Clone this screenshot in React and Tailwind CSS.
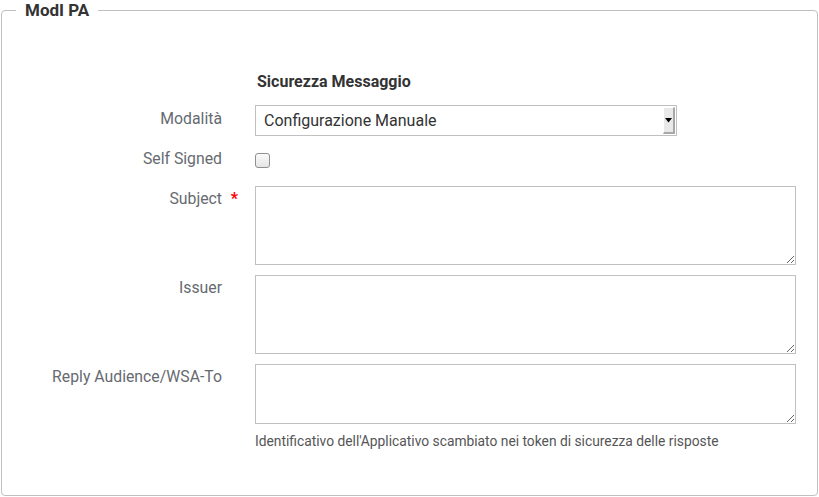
import React from "react";

export default function App() {
  const font = { fontFamily: "Roboto, 'Liberation Sans', sans-serif" };
  return (
    <div className="w-[819px] h-[497px] bg-white px-[1px]" style={font}>
      <fieldset className="border border-[#c0c0c0] rounded-[4px] h-[496px] px-[14px]">
        <legend className="px-[9px] text-[17px] leading-[20px] font-bold text-[#333]">ModI PA</legend>
        <div className="flex flex-col -ml-[14px]">
          {/* Header */}
          <div className="flex mt-[52px]">
            <div className="w-[220px] shrink-0" />
            <div className="ml-[35px] text-[16px] leading-[20px] font-bold text-[#333]">Sicurezza Messaggio</div>
          </div>
          {/* Modalità */}
          <div className="flex mt-[13px] items-center">
            <div className="w-[220px] shrink-0 text-right text-[15.8px] leading-[20px] text-[#666a70] -mt-[4px]">Modalità</div>
            <div className="ml-[33px] w-[422px] h-[31px] border border-[#c0c0c0] flex items-stretch bg-white">
              <div className="flex-1 pl-[8px] flex items-center text-[16px] text-[#333]">Configurazione Manuale</div>
              <div className="w-[12px] mt-[1px] mb-[1px] mr-[1px] bg-[#e9e9e9] border-r-2 border-b-2 border-[#a8a8a8] border-l border-l-white border-t border-t-white flex items-center justify-center">
                <svg width="7" height="5" viewBox="0 0 7 5"><path d="M0 0H7L3.5 4.5Z" fill="#000" /></svg>
              </div>
            </div>
          </div>
          {/* Self Signed */}
          <div className="flex mt-[13px] items-center h-[20px]">
            <div className="w-[220px] shrink-0 text-right text-[15.8px] leading-[20px] text-[#666a70]">Self Signed</div>
            <div className="ml-[33px] mt-[2px] w-[15px] h-[15px] rounded-[3px] border border-[#8f8f8f] bg-gradient-to-b from-[#fafafa] to-[#e6e6e6]" />
          </div>
          {/* Subject */}
          <div className="flex mt-[17px]">
            <div className="w-[220px] shrink-0 text-right text-[15.8px] leading-[20px] text-[#666a70] pt-[3px] relative">
              Subject
              <span className="absolute right-[-16px] top-[3px] text-[#ff0000] font-bold text-[16px]">*</span>
            </div>
            <textarea className="ml-[33px] w-[541px] h-[79px] border border-[#c0c0c0] outline-none resize" />
          </div>
          {/* Issuer */}
          <div className="flex mt-[10px]">
            <div className="w-[220px] shrink-0 text-right text-[15.8px] leading-[20px] text-[#666a70] pt-[3px]">Issuer</div>
            <textarea className="ml-[33px] w-[541px] h-[79px] border border-[#c0c0c0] outline-none resize" />
          </div>
          {/* Reply */}
          <div className="flex mt-[10px]">
            <div className="w-[220px] shrink-0 text-right text-[15.8px] leading-[20px] text-[#666a70] pt-[3px]">Reply Audience/WSA-To</div>
            <textarea className="ml-[33px] w-[541px] h-[60px] border border-[#c0c0c0] outline-none resize" />
          </div>
          {/* Help */}
          <div className="flex mt-[7px]">
            <div className="w-[220px] shrink-0" />
            <div className="ml-[33px] text-[13.8px] leading-[20px] text-[#555]">
              Identificativo dell'Applicativo scambiato nei token di sicurezza delle risposte
            </div>
          </div>
        </div>
      </fieldset>
    </div>
  );
}
